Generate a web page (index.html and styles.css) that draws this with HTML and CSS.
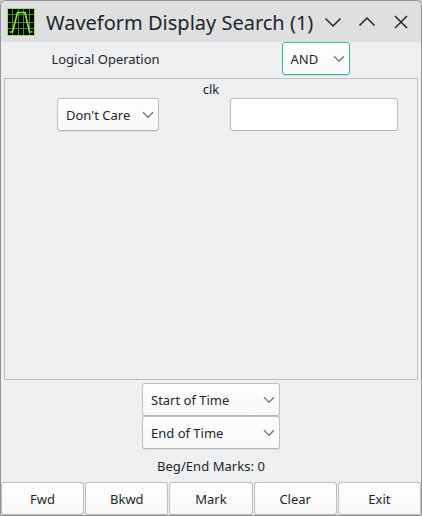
FILE: index.html
```html
<!DOCTYPE html>
<html lang="en">
<head>
<meta charset="utf-8">
<title>Waveform Display Search (1)</title>
<link rel="stylesheet" href="styles.css">
</head>
<body>
<div class="window">
  <header class="titlebar">
    <svg class="app-icon" viewBox="0 0 28 28" width="28" height="28">
      <rect width="28" height="28" fill="#98e060"/>
      <rect x="1" y="1" width="26" height="26" fill="#000"/>
      <path d="M5.5 1v26M11.5 1v26M16.5 1v26M22.5 1v26M1 6.5h26M1 14.5h26M1 20.5h26" stroke="#4a8c20" fill="none"/>
      <path d="M2.5 24H5.5L10.5 4.5H18L22.5 24H25.5" stroke="#80e838" stroke-width="1.7" fill="none"/>
    </svg>
    <h1 class="title">Waveform Display Search (1)</h1>
    <div class="controls">
      <svg viewBox="0 0 18 18" width="18" height="18"><path d="M1.5 5.5L9 13L16.5 5.5"/></svg>
      <svg viewBox="0 0 18 18" width="18" height="18"><path d="M1.5 12.5L9 5L16.5 12.5"/></svg>
      <svg viewBox="0 0 18 18" width="18" height="18"><path d="M3 3L15 15M15 3L3 15"/></svg>
    </div>
  </header>
  <main class="content">
    <div class="operation">
      <span class="op-label">Logical Operation</span>
      <div class="op-cell"><button class="box combo focused">AND<svg class="arrow" viewBox="0 0 12 8" width="12" height="8"><path d="M1 1.2L6 6.2L11 1.2"/></svg></button></div>
    </div>
    <section class="signals">
      <div class="signal-name">clk</div>
      <div class="signal-row">
        <button class="box combo care">Don't Care<svg class="arrow" viewBox="0 0 12 8" width="12" height="8"><path d="M1 1.2L6 6.2L11 1.2"/></svg></button>
        <input class="box entry" type="text" aria-label="clk">
      </div>
    </section>
    <div class="range">
      <button class="box combo">Start of Time<svg class="arrow" viewBox="0 0 12 8" width="12" height="8"><path d="M1 1.2L6 6.2L11 1.2"/></svg></button>
      <button class="box combo">End of Time<svg class="arrow" viewBox="0 0 12 8" width="12" height="8"><path d="M1 1.2L6 6.2L11 1.2"/></svg></button>
    </div>
    <div class="marks">Beg/End Marks: 0</div>
    <footer class="actions">
      <button class="box">Fwd</button>
      <button class="box">Bkwd</button>
      <button class="box">Mark</button>
      <button class="box">Clear</button>
      <button class="box">Exit</button>
    </footer>
  </main>
</div>
</body>
</html>
```
FILE: styles.css
```css
* { box-sizing: border-box; }
body {
  margin: 0;
  background: #c4c5c6;
  color: #232629;
  font: 13px/18px "Noto Sans", sans-serif;
}
.window {
  width: 422px;
  height: 516px;
  border: 1px solid #929395;
  border-radius: 6px 6px 0 0;
  background: #eeeff1;
  overflow: hidden;
}
.titlebar {
  display: flex;
  align-items: center;
  height: 41px;
  padding: 1px 11px 0 6px;
  background: #dedfe1;
}
.app-icon { flex: none; }
.title {
  margin: 2px 0 0 11px;
  font-size: 20px;
  font-weight: 400;
  line-height: 28px;
  white-space: nowrap;
}
.controls {
  display: flex;
  gap: 16px;
  margin-left: auto;
}
.controls path { fill: none; stroke: #232629; stroke-width: 1.5; }
.box {
  height: 33px;
  margin: 0;
  padding: 0;
  border: 1px solid #bcbebf;
  border-bottom-color: #b4b6b8;
  border-radius: 3px;
  background: linear-gradient(#fefefe, #f8f8f8);
  color: inherit;
  font: inherit;
  outline: none;
}
.combo {
  display: flex;
  align-items: center;
  justify-content: space-between;
  padding: 0 4px 0 8px;
  white-space: nowrap;
  box-shadow: 0 1px 0 rgba(0, 0, 0, 0.08);
}
.arrow path { fill: none; stroke: #7b7d7f; stroke-width: 1.5; }
.focused { width: 68px; border-color: #36b99f; }
.operation {
  display: grid;
  grid-template-columns: 209px 211px;
  align-items: center;
  height: 33px;
}
.op-label { text-align: center; }
.op-cell { display: flex; justify-content: center; }
.signals {
  height: 302px;
  margin: 3px 3px 0;
  border: 1px solid #bcbebf;
}
.signal-name { height: 19px; line-height: 21px; text-align: center; }
.signal-row {
  display: flex;
  justify-content: space-between;
  padding: 0 19px 0 52px;
}
.care { width: 102px; }
.entry { width: 168px; background: #fff; }
.range { width: 138px; margin: 3px auto 0; }
.range .combo { width: 138px; }
.marks { height: 33px; line-height: 34px; text-align: center; letter-spacing: 0.06px; }
.actions { display: grid; grid-template-columns: repeat(5, 1fr); column-gap: 1px; }
```
